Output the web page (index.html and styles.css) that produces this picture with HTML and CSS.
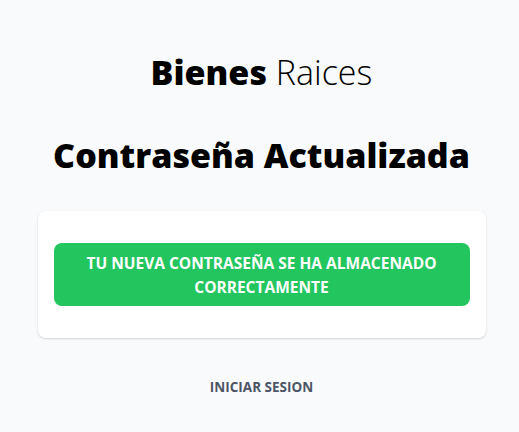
FILE: index.html
```html
<!DOCTYPE html>
<html lang="es">
<head>
<meta charset="utf-8">
<title>Bienes Raices</title>
<link rel="stylesheet" href="styles.css">
</head>
<body>
<main class="page">
  <h1 class="brand"><span class="brand-bold">Bienes</span> Raices</h1>
  <h2 class="title">Contraseña Actualizada</h2>
  <div class="card">
    <p class="alert">Tu nueva contraseña se ha almacenado correctamente</p>
  </div>
  <nav class="links">
    <a href="#" class="link">Iniciar Sesion</a>
  </nav>
</main>
</body>
</html>
```

FILE: styles.css
```css
* { box-sizing: border-box; }
html, body { margin: 0; padding: 0; }
body {
  background: #f9fafb;
  font-family: "Open Sans", "Noto Sans", sans-serif;
  color: #000;
}
.page {
  padding: 52px 0 0 4px;
  display: flex;
  flex-direction: column;
  align-items: center;
}
.brand {
  margin: 0;
  font-size: 34px;
  line-height: 40px;
  font-weight: 300;
  text-align: center;
}
.brand-bold { font-weight: 800; }
.title {
  margin: 43px 0 0;
  font-size: 34px;
  line-height: 40px;
  font-weight: 800;
  text-align: center;
}
.card {
  margin-top: 36px;
  width: 448px;
  background: #fff;
  border-radius: 8px;
  box-shadow: 0 1px 3px rgba(0,0,0,0.1), 0 1px 2px rgba(0,0,0,0.06);
  padding: 32px 16px;
}
.alert {
  margin: 0;
  background: #22c55e;
  color: #fff;
  border-radius: 8px;
  padding: 8px 16px 7px;
  text-align: center;
  text-transform: uppercase;
  font-weight: 700;
  font-size: 15.5px;
  line-height: 24px;
}
.links {
  margin-top: 40px;
  display: flex;
  justify-content: center;
}
.link {
  color: #4b5563;
  text-decoration: none;
  text-transform: uppercase;
  font-weight: 700;
  font-size: 13.5px;
}
```
